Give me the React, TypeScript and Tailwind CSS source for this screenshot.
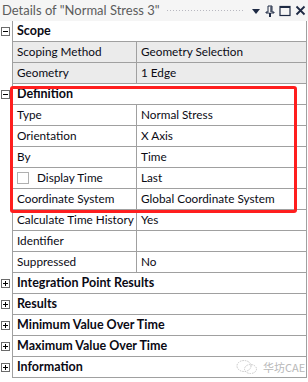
import React from 'react';

type Row =
  | { kind: 'section'; label: string; open: boolean }
  | { kind: 'prop'; label: string; value: string; gray?: boolean; check?: boolean };

const rows: Row[] = [
  { kind: 'section', label: 'Scope', open: true },
  { kind: 'prop', label: 'Scoping Method', value: 'Geometry Selection', gray: true },
  { kind: 'prop', label: 'Geometry', value: '1 Edge', gray: true },
  { kind: 'section', label: 'Definition', open: true },
  { kind: 'prop', label: 'Type', value: 'Normal Stress' },
  { kind: 'prop', label: 'Orientation', value: 'X Axis' },
  { kind: 'prop', label: 'By', value: 'Time' },
  { kind: 'prop', label: 'Display Time', value: 'Last', check: true },
  { kind: 'prop', label: 'Coordinate System', value: 'Global Coordinate System' },
  { kind: 'prop', label: 'Calculate Time History', value: 'Yes' },
  { kind: 'prop', label: 'Identifier', value: '' },
  { kind: 'prop', label: 'Suppressed', value: 'No' },
  { kind: 'section', label: 'Integration Point Results', open: false },
  { kind: 'section', label: 'Results', open: false },
  { kind: 'section', label: 'Minimum Value Over Time', open: false },
  { kind: 'section', label: 'Maximum Value Over Time', open: false },
  { kind: 'section', label: 'Information', open: false },
];

// tree expander box in the gutter
const Expander: React.FC<{ open: boolean }> = ({ open }) => (
  <svg width="9" height="9" viewBox="0 0 9 9" className="block">
    <rect x="0.5" y="0.5" width="8" height="8" fill="#fff" stroke="#6a6a6a" />
    <line x1="2" y1="4.5" x2="7" y2="4.5" stroke="#000" />
    {!open && <line x1="4.5" y1="2" x2="4.5" y2="7" stroke="#000" />}
  </svg>
);

const TitleIcons: React.FC = () => (
  <div className="flex items-center gap-[4px] pr-[2px]">
    <svg width="10" height="10" viewBox="0 0 10 10">
      <path d="M1 3 L9 3 L5 8 Z" fill="#1e2a44" />
    </svg>
    <svg width="10" height="12" viewBox="0 0 10 12">
      <path d="M3 1 H7 V7 H9 V8 H5.5 V12 H4.5 V8 H1 V7 H3 Z" fill="none" stroke="#1e2a44" strokeWidth="1" />
      <line x1="6" y1="1.5" x2="6" y2="7" stroke="#1e2a44" strokeWidth="1.2" />
    </svg>
    <svg width="12" height="12" viewBox="0 0 12 12">
      <rect x="1" y="1.5" width="10" height="9" fill="none" stroke="#1e2a44" strokeWidth="1.2" />
      <line x1="1" y1="2.2" x2="11" y2="2.2" stroke="#1e2a44" strokeWidth="1.6" />
    </svg>
    <svg width="11" height="11" viewBox="0 0 11 11">
      <path d="M1.5 1.5 L9.5 9.5 M9.5 1.5 L1.5 9.5" stroke="#1e2a44" strokeWidth="1.8" />
    </svg>
  </div>
);

export default function App() {
  return (
    <div className="relative h-[382px] w-[308px] overflow-hidden bg-white text-[11.75px] text-[#0a0a14]" style={{ fontFamily: 'Lato, "Liberation Sans", sans-serif' }}>
      {/* Title bar */}
      <div className="flex h-[21px] items-center bg-[#f5f5f5] pl-[2px]">
        <span className="whitespace-nowrap text-[13px] text-[#5c5c5c]">Details of "Normal Stress 3"</span>
        <div className="mx-[6px] h-[3px] flex-1 bg-[radial-gradient(#b8b8c0_0.6px,transparent_0.8px)] bg-[length:3px_3px]" />
        <TitleIcons />
      </div>

      {/* Property grid */}
      <div className="pr-[1px]">
        {rows.map((r, i) => (
          <div key={i} className="flex h-[21px]">
            <div className="flex w-[12px] shrink-0 items-center pl-[1px]">
              {r.kind === 'section' && <Expander open={r.open} />}
            </div>
            {r.kind === 'section' ? (
              <div className="flex flex-1 items-center border-b border-l border-r border-[#a0a0a0] pl-[4px] text-[12.5px] font-bold">
                {r.label}
              </div>
            ) : (
              <div className={`flex flex-1 border-b border-l border-r border-[#a0a0a0] ${r.gray ? 'bg-[#ebebeb]' : 'bg-white'}`}>
                <div className="flex w-[124px] shrink-0 items-center border-r border-[#a0a0a0] pl-[4px] whitespace-nowrap">
                  {r.check && <span className="mr-[8px] inline-block h-[12px] w-[12px] border border-[#b0b0b0] bg-white" />}
                  {r.label}
                </div>
                <div className="flex flex-1 items-center pl-[4px] whitespace-nowrap">{r.value}</div>
              </div>
            )}
          </div>
        ))}
      </div>

      {/* Red annotation frame */}
      <div className="absolute left-[10px] top-[86px] h-[127px] w-[287px] rounded-[3px] border-[3px] border-[#ff1e1e]" />

      {/* Watermark */}
      <div className="absolute left-[236px] top-[359px] flex items-center gap-[5px] text-[11px] text-[#b8b8b8]">
        <svg width="22" height="16" viewBox="0 0 22 16">
          <ellipse cx="8" cy="7" rx="7" ry="5.5" fill="none" stroke="#c8c8c8" strokeWidth="1" strokeDasharray="1.5 1" />
          <ellipse cx="14.5" cy="10" rx="6" ry="4.5" fill="none" stroke="#c8c8c8" strokeWidth="1" strokeDasharray="1.5 1" />
        </svg>
        <span style={{ fontFamily: '"Noto Sans CJK SC", sans-serif' }}>华坊CAE</span>
      </div>
    </div>
  );
}
